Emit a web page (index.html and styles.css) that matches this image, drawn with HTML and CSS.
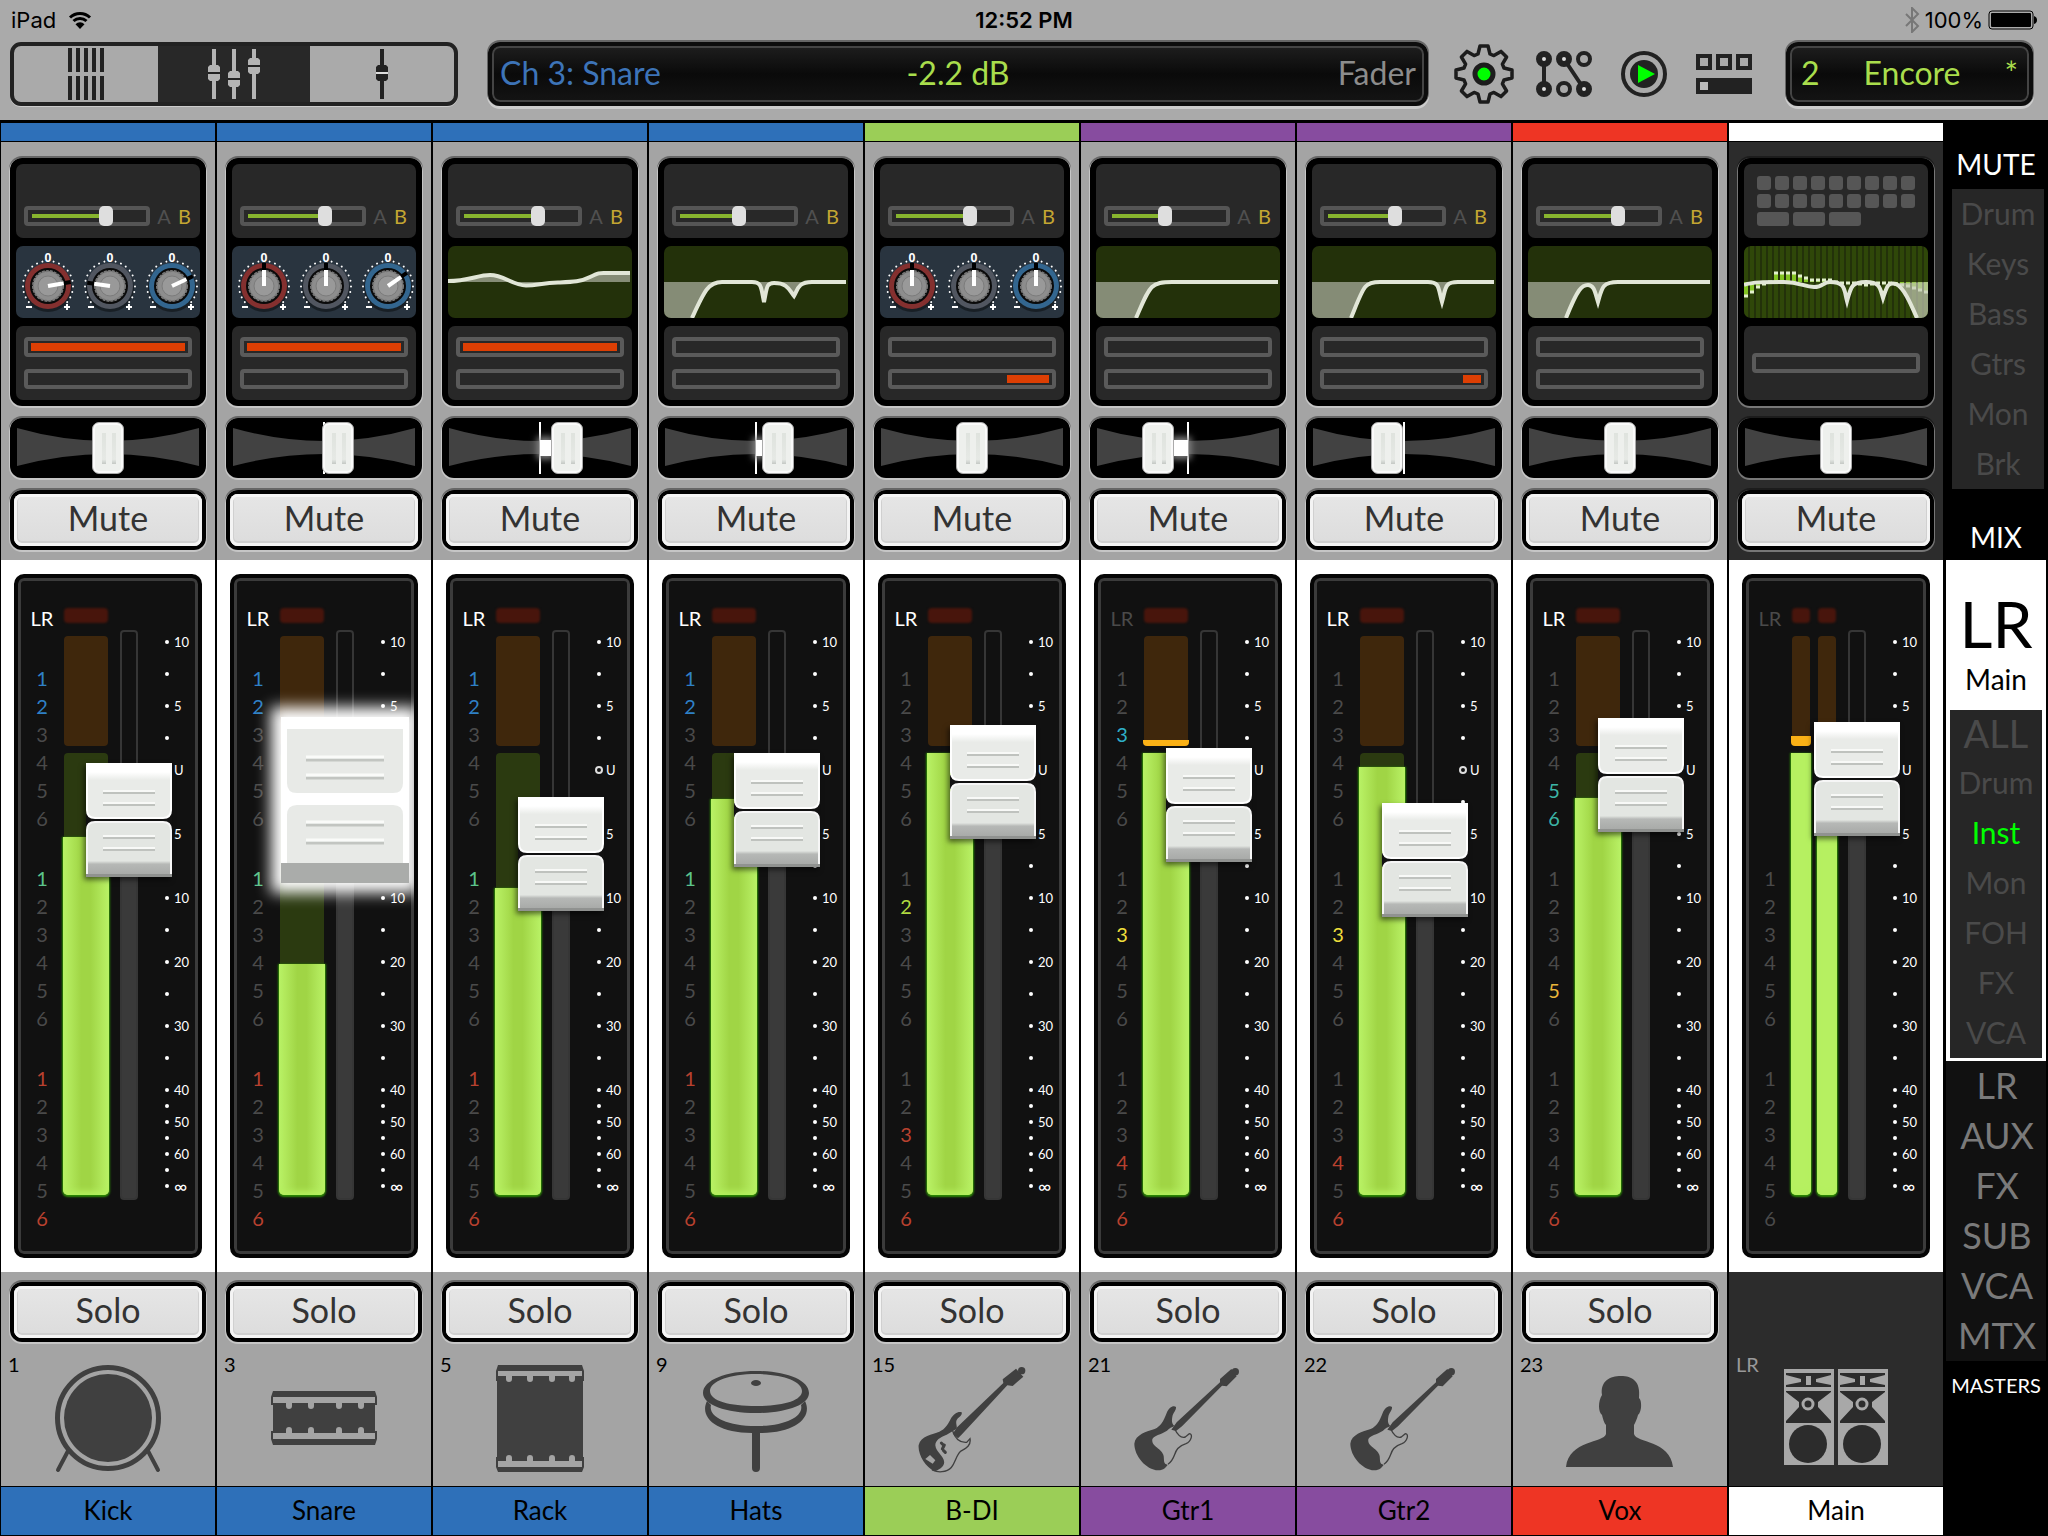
FILE: index.html
```html
<!DOCTYPE html>
<html lang="en">
<head>
    <meta charset="UTF-8">
    <meta name="viewport" content="width=device-width, initial-scale=1.0">
    <title>Mixer</title>
    <link rel="stylesheet" href="styles.css">
</head>
<body>

<svg class="symbols" aria-hidden="true">
    <symbol id="icon-kick" viewBox="0 0 108 108">
        <circle cx="54" cy="53" r="50.500" fill="none" stroke="currentColor" stroke-width="5"/>
        <circle cx="54" cy="53" r="44" fill="currentColor"/>
        <path d="M14 86L4 105M94 86l10 19" stroke="currentColor" stroke-width="4" stroke-linecap="round"/>
    </symbol>
    <symbol id="icon-snare" viewBox="0 0 108 108">
        <path fill="currentColor" d="M3 26h102l2 6H1zM1 32h2v8H1zM105 32h2v8h-2zM3 38h13v3a3 3 0 0 0 6 0v-3h16v3a3 3 0 0 0 6 0v-3h22v3a3 3 0 0 0 6 0v-3h16v3a3 3 0 0 0 6 0v-3h11v30H94v-3a3 3 0 0 0-6 0v3H72v-3a3 3 0 0 0-6 0v3H44v-3a3 3 0 0 0-6 0v3H22v-3a3 3 0 0 0-6 0v3H3zM1 66h2v8H1zM105 66h2v8h-2zM1 74h106l-2 6H3z"/>
    </symbol>
    <symbol id="icon-rack" viewBox="0 0 108 108">
        <path fill="currentColor" d="M12 0h84l2 6H10zM10 6h2v10h-2zM96 6h2v10h-2zM11 11h9v3a3 3 0 0 0 6 0v-3h15v3a3 3 0 0 0 6 0v-3h16v3a3 3 0 0 0 6 0v-3h14v3a3 3 0 0 0 6 0v-3h8v85h-8v-3a3 3 0 0 0-6 0v3H69v-3a3 3 0 0 0-6 0v3H47v-3a3 3 0 0 0-6 0v3H26v-3a3 3 0 0 0-6 0v3h-9zM10 92h2v10h-2zM96 92h2v10h-2zM10 102h88l-2 5H12z"/>
    </symbol>
    <symbol id="icon-hats" viewBox="0 0 108 108">
        <path fill="currentColor" fill-rule="evenodd" d="M54 6c30 0 53 9 53 22 0 12-23 20-53 20S1 40 1 28C1 15 24 6 54 6zm0 3C28 9 8 16 8 26s20 15 46 15 46-5 46-15S80 9 54 9z"/>
        <path fill="currentColor" d="M5 36c-8 16 9 32 45 32v35a4 4 0 0 0 8 0V68c36 0 53-16 45-32l-4 4c3 11-15 21-45 21S6 51 9 40z"/>
        <ellipse cx="54" cy="18" rx="5" ry="3" fill="currentColor"/>
    </symbol>
    <symbol id="icon-bass" viewBox="0 0 324 324">
        <path fill="currentColor" d="M131 142C122 138 108 144 98 162 88 180 82 192 64 200 44 208 8 212 2 240c-3 28 20 66 48 79 8-2 22-10 26-18 12-22-22-36-24-60 0-16 14-24 34-32l30-18c2-8-4-16 0-26 4-8 18-14 15-23z"/>
        <path fill="none" stroke="currentColor" stroke-width="4" d="M104 198c8 24 20 36 42 34l10-11c4 22-14 30-28 38-20 16-14 58-56 61-12 2-20-1-30-5"/>
        <path fill="currentColor" d="M104 206l14-20L256 54l-2-11 40-32 22 24-32 28-16-2L132 208l-12 12z"/>
        <circle cx="311" cy="17" r="11" fill="currentColor"/>
        <path stroke="currentColor" stroke-width="9" stroke-linecap="round" d="M70 234l6 6M76 256l6 6M79 240l-6 12"/>
        <path fill="#a4a4a4" d="M36 270l16 16-8 10-22-14z"/>
    </symbol>
    <symbol id="icon-guitar" viewBox="0 0 324 324">
        <path fill="currentColor" d="M126 126C118 120 104 128 98 144 88 170 80 184 62 192 38 200 4 208 1 236c0 36 34 78 72 80 16 0 24-10 28-17-14-2-10-12-12-26-4-22-38-28-34-50 4-12 26-14 44-26 8-8 14-10 22-14-8-8-8-16-6-28 2-12 12-18 11-29z"/>
        <path fill="none" stroke="currentColor" stroke-width="4" d="M122 192c8 16 20 28 32 24l12-10c12 0 6 24-10 30-44 14-24 40-54 62"/>
        <path fill="currentColor" d="M112 194l16-22L258 52l0-10 34-30 16 22-30 30-14-2L144 184l-18 14z"/>
        <circle cx="304" cy="20" r="11" fill="currentColor"/>
    </symbol>
    <symbol id="icon-vox" viewBox="0 0 108 108">
        <path fill="currentColor" d="M36 30C34 16 44 11 55 11s20 5 18 22c3 2 3 14-1 17-1 4-3 8-4 10v9c2 9 36 6 39 33H0c3-27 38-24 40-33v-9c-2-2-3-6-4-10-4-3-4-14 0-20z"/>
    </symbol>
    <symbol id="icon-speakers" viewBox="0 0 108 108">
        <g id="speaker">
            <path fill="#a8a8a8" d="M2 4h50v96H2z"/>
            <path fill="#2c2c2c" d="M4 8h45v14H4zM4 26h45v32H4z"/>
            <path fill="#a8a8a8" d="M4 10l15 4v3L4 20zM49 10l-15 4v3l15 3zM24 11h5v9h-5zM4 27l13 10v5L4 56zM49 27L36 37v5l13 14zM2 22h50v2H2z"/>
            <circle cx="26" cy="39" r="9" fill="#2c2c2c"/>
            <ellipse cx="26" cy="39" rx="5" ry="5" fill="none" stroke="#a8a8a8" stroke-width="3"/>
            <circle cx="26" cy="79" r="19" fill="#2c2c2c"/>
        </g>
        <use href="#speaker" x="54"/>
    </symbol>
</svg>

<header class="topbar">
    <div class="status">
        <span class="status-left">iPad
            <svg width="24" height="18" viewBox="0 0 24 18"><path d="M2 6.500a14.500 14.500 0 0 1 20 0M5.500 10a9.500 9.500 0 0 1 13 0" fill="none" stroke="#000" stroke-width="3"/><path d="M12 18l-4.500-4.800a6.400 6.400 0 0 1 9 0z"/></svg>
        </span>
        <time>12:52 PM</time>
        <span class="status-right">
            <svg width="16" height="26" viewBox="0 0 16 26"><path d="M2 7l12 12-6 6V1l6 6L2 19" fill="none" stroke="#777" stroke-width="2"/></svg>
            100%
            <svg width="49" height="20" viewBox="0 0 49 20"><rect x="1" y="1" width="44" height="18" rx="3" fill="none" stroke="#000"/><rect x="3" y="3" width="40" height="14" rx="1"/><path d="M46 6q3 1 3 4t-3 4z"/></svg>
        </span>
    </div>
    <div class="toolbar">
        <div class="segments">
            <button class="segment" aria-label="Overview">
                <svg width="36" height="52" viewBox="0 0 36 52"><path d="M2 0v24M10 0v24M18 0v24M26 0v24M34 0v24M2 28v24M10 28v24M18 28v24M26 28v24M34 28v24" stroke="#222" stroke-width="4"/></svg>
            </button>
            <button class="segment active" aria-label="Mixer">
                <svg width="54" height="50" viewBox="0 0 54 50"><path d="M7 0v50M27 0v50M47 0v50" stroke="#b4b4b4" stroke-width="4"/><path fill="#b4b4b4" d="M1 18l2-2h8l2 2v12l-2 2H3l-2-2zM21 24l2-2h8l2 2v12l-2 2h-8l-2-2zM41 11l2-2h8l2 2v12l-2 2h-8l-2-2z"/><path d="M1 24h12M21 30h12M41 17h12" stroke="#222" stroke-width="2"/></svg>
            </button>
            <button class="segment" aria-label="Channel">
                <svg width="12" height="50" viewBox="0 0 12 50"><path d="M6 0v50" stroke="#222" stroke-width="4"/><path fill="#222" d="M0 18l2-2h8l2 2v12l-2 2H2l-2-2z"/><path d="M0 24h12" stroke="#ddd" stroke-width="2"/></svg>
            </button>
        </div>
        <div class="display">
            <span class="display-channel">Ch 3: Snare</span>
            <output>-2.2 dB</output>
            <span class="display-mode">Fader</span>
        </div>
        <nav class="tools">
            <button aria-label="Settings">
                <svg width="60" height="60" viewBox="-30 -30 60 60"><path d="M-6-20L-4-28H4L6-20 9.900-18.400 17-22.600 22.600-17 18.400-9.900 20-6 28-4V4L20 6 18.400 9.900 22.600 17 17 22.600 9.900 18.400 6 20 4 28H-4L-6 20-9.900 18.400-17 22.600-22.600 17-18.400 9.900-20 6-28 4V-4L-20-6-18.400-9.900-22.600-17-17-22.600-9.900-18.400z" fill="none" stroke="#1c1c1c" stroke-width="3.500" stroke-linejoin="round"/><circle r="9" fill="#0f0" stroke="#1c1c1c" stroke-width="5"/></svg>
            </button>
            <button aria-label="Routing">
                <svg width="56" height="46" viewBox="0 0 56 46"><path d="M8 8v30M28 8l20 30" stroke="#222" stroke-width="4"/><g fill="#a9a9a9" stroke="#222" stroke-width="4"><circle cx="48" cy="8" r="6"/><circle cx="28" cy="38" r="6"/></g><g fill="#ddd" stroke="#222" stroke-width="6"><circle cx="8" cy="8" r="5"/><circle cx="28" cy="8" r="5"/><circle cx="8" cy="38" r="5"/><circle cx="48" cy="38" r="5"/></g></svg>
            </button>
            <button aria-label="Play">
                <svg width="46" height="46" viewBox="0 0 46 46"><circle cx="23" cy="23" r="21" fill="none" stroke="#222" stroke-width="4"/><circle cx="23" cy="23" r="14" fill="#222"/><path d="M17 14l17 9-17 9z" fill="#0f0"/></svg>
            </button>
            <button aria-label="Layout">
                <svg width="56" height="40" viewBox="0 0 56 40"><path d="M2 2h12v12H2zM22 2h12v12H22zM42 2h12v12H42z" fill="none" stroke="#222" stroke-width="4"/><path d="M0 24h56v16H0z" fill="#222"/><path d="M4 28h8v8H4z" fill="#bbb"/></svg>
            </button>
        </nav>
        <div class="display preset">
            <span>2</span>
            <span>Encore</span>
            <span>*</span>
        </div>
    </div>
</header>

<main class="console">
    <div class="strips" id="strips"></div>

    <aside class="sidebar">
        <h2>MUTE</h2>
        <div class="mute-groups">
            <button>Drum</button>
            <button>Keys</button>
            <button>Bass</button>
            <button>Gtrs</button>
            <button>Mon</button>
            <button>Brk</button>
        </div>
        <h2 class="mix-title">MIX</h2>
        <div class="mix">
            <div class="mix-name"><strong>LR</strong>Main</div>
            <div class="views">
                <button class="all">ALL</button>
                <button>Drum</button>
                <button class="on">Inst</button>
                <button>Mon</button>
                <button>FOH</button>
                <button>FX</button>
                <button>VCA</button>
            </div>
        </div>
        <div class="masters">
            <button>LR</button>
            <button>AUX</button>
            <button>FX</button>
            <button>SUB</button>
            <button>VCA</button>
            <button>MTX</button>
        </div>
        <h3>MASTERS</h3>
    </aside>
</main>

<script src="script.js"></script>
</body>
</html>
```

FILE: styles.css
```css
* {
    box-sizing: border-box;
}
body {
    margin: 0;
    background: #000;
    font-family: Lato, 'Liberation Sans', sans-serif;
    color: #000;
}
button {
    padding: 0;
    border: none;
    background: none;
    font: inherit;
    color: inherit;
    cursor: pointer;
}
svg {
    display: block;
}
h2, h3 {
    margin: 0;
    font-weight: 400;
}
.symbols {
    position: absolute;
    width: 0;
    height: 0;
}

/* top bar */
.topbar {
    height: 123px;
    background: #aaa;
    border-bottom: 3px solid #000;
}
.status {
    display: grid;
    grid-template-columns: 1fr auto 1fr;
    align-items: center;
    height: 40px;
    padding: 0 11px;
    font: 22px Inter, sans-serif;
}
.status time {
    font-weight: 600;
}
.status-left, .status-right {
    display: flex;
    align-items: center;
    gap: 12px;
}
.status-right {
    justify-content: flex-end;
    gap: 5px;
}
.toolbar {
    display: flex;
    align-items: center;
    height: 68px;
    padding: 0 15px 0 10px;
}
.segments {
    display: flex;
    width: 448px;
    height: 64px;
    border: 4px solid #222;
    border-radius: 11px;
    box-shadow: 0 1px 0 #ccc;
}
.segment {
    flex: 1;
    display: flex;
    align-items: center;
    justify-content: center;
}
.segment.active {
    flex: none;
    width: 152px;
    background: #282828;
}
.display {
    flex: 1;
    display: grid;
    grid-template-columns: 1fr auto 1fr;
    align-items: center;
    height: 64px;
    margin-left: 30px;
    padding: 0 8px 2px;
    background: linear-gradient(#1e1e1e, #0a0a0a 50%, #141414);
    border: 4px solid #0c0c0c;
    border-radius: 12px;
    box-shadow: inset 0 0 0 2px #444, 0 -1px 0 1px #666, 0 2px 0 1px #ccc;
    font-size: 32px;
    line-height: 36px;
    color: #a9dd4c;
}
.display-channel {
    color: #3d74b8;
}
.display-mode {
    text-align: right;
    color: #8c8c8c;
}
.tools {
    display: flex;
    align-items: center;
    margin: 0 4px 0 26px;
    gap: 22px;
}
.tools button:nth-child(3) {
    margin: 0 7px;
}
.preset {
    flex: none;
    grid-template-columns: auto 1fr auto;
    gap: 12px;
    width: 247px;
    padding: 0 11px 2px;
}
.preset span {
    text-align: center;
}

/* channel strips */
.console {
    display: flex;
}
.strips {
    flex: 1;
    display: grid;
    grid-template-columns: repeat(9, 1fr);
    gap: 2px;
    padding: 0 1px;
}
.strip {
    --tint: #2e70b9;
    --panel: #a4a4a4;
    --lo: #c6c6c6;
    --hi: #666;
    display: flex;
    flex-direction: column;
    min-width: 0;
    padding-bottom: 1px;
}
.strip.lime { --tint: #9bce57; }
.strip.purple { --tint: #874c9f; }
.strip.red { --tint: #ee3524; }
.strip.main {
    --tint: #fff;
    --panel: #2c2c2c;
    --lo: #777;
    --hi: #1c1c1c;
}
.tab {
    height: 18px;
    margin-bottom: 1px;
    background: var(--tint);
}
.head {
    display: flex;
    flex-direction: column;
    gap: 12px;
    padding: 16px 9px 10px;
    background: var(--panel);
}
.fx, .pan, .push {
    border-radius: 12px;
    background: #000;
    box-shadow: 0 1px 0 1px var(--lo), 0 -1px 0 1px var(--hi);
}
.fx {
    display: grid;
    grid-template-rows: 74px 72px 74px;
    gap: 8px;
    padding: 6px;
}
.cell {
    min-width: 0;
    overflow: hidden;
    border-radius: 7px;
    background: #282828;
}
.cell svg {
    width: 100%;
    height: 100%;
}
.sends {
    display: flex;
    align-items: flex-end;
    justify-content: space-between;
    padding: 0 9px 12px 8px;
    font-size: 20px;
    line-height: 20px;
    color: #505050;
}
.sends b {
    font-weight: 400;
    color: #c3a632;
}
.gain {
    appearance: none;
    width: 126px;
    height: 20px;
    margin: 0;
    border-radius: 4px;
    background: linear-gradient(#87b42e, #87b42e) 8px 50% / calc(var(--v) * 1px) 4px no-repeat;
    box-shadow: inset 0 0 0 4px #555;
}
.gain::-webkit-slider-thumb {
    appearance: none;
    width: 14px;
    height: 20px;
    border-radius: 5px;
    background: #dedede;
}
.geq {
    display: grid;
    grid-template-columns: repeat(9, 1fr);
    grid-auto-rows: 14px;
    align-content: start;
    gap: 4px;
    padding: 12px 13px;
}
.geq i {
    border-radius: 3px;
    background: #565656;
}
.geq .wide {
    grid-column: span 2;
}
.knobs {
    background: #29343f;
}
.knobs text {
    font: 700 12px 'Noto Sans', sans-serif;
    fill: #fff;
    text-anchor: middle;
}
.eq {
    background: #23310a;
}
.dynamics {
    display: flex;
    flex-direction: column;
    justify-content: center;
    gap: 12px;
    padding: 0 8px;
}
.reduction {
    display: flex;
    justify-content: flex-end;
    height: 20px;
    padding: 2px 3px;
    border: 4px solid #5a5a5a;
    border-radius: 4px;
}
.reduction i {
    background: #dd3f04;
}
.pan {
    position: relative;
    height: 60px;
}
.pan svg {
    width: 100%;
    height: 60px;
}
.pan input {
    position: absolute;
    inset: 4px 0;
    appearance: none;
    width: 100%;
    height: 52px;
    margin: 0;
    background: none;
}
.pan input::-webkit-slider-thumb {
    appearance: none;
    width: 32px;
    height: 52px;
    border: 1px solid #aaa;
    border-radius: 7px;
    background:
        linear-gradient(#dfe3de, #e6e9e5 85%, #c4c8c4) 9px 10px / 4px 31px no-repeat,
        linear-gradient(#dfe3de, #e6e9e5 85%, #c4c8c4) 19px 10px / 4px 31px no-repeat,
        #eef0ed;
    box-shadow: inset 0 0 0 2px #fafafa;
}
.pan-mark {
    position: absolute;
    top: 4px;
    left: 50%;
    width: 2px;
    height: 52px;
    margin-left: -1px;
    background: #fff;
}
.pan-glow {
    position: absolute;
    top: 22px;
    height: 16px;
    background: #fff;
    box-shadow: 0 0 7px 3px #888;
}
.pan-glow.right { left: 50%; }
.pan-glow.left { right: 50%; }
.push {
    display: block;
    width: 100%;
    height: 60px;
    padding: 4px;
    font-size: 34px;
    color: #333;
}
.push span {
    display: block;
    height: 52px;
    border-radius: 8px;
    background: linear-gradient(#e6e6e6, #dcdcdc);
    box-shadow: inset 0 0 0 3px #f4f4f4, inset 0 -1px 0 4px #d0d0d0;
    line-height: 48px;
}

/* fader section */
.fader-zone {
    padding: 14px 13px;
    background: #fff;
}
.fader-box {
    position: relative;
    display: flex;
    height: 684px;
    overflow: hidden;
    border: 4px solid #050505;
    border-radius: 10px;
    background: #111;
    box-shadow: inset 0 0 0 3px #3b3b3b;
    padding: 0 3px;
}
.assign {
    flex: 1;
    padding: 26px 0 0;
    font-size: 20px;
    line-height: 28px;
    text-align: center;
    color: #4a4a4a;
}
.assign ol {
    margin: 0;
    padding: 32px 0 0;
    list-style: none;
}
.assign .blank {
    visibility: hidden;
}
.assign .white { color: #fff; }
.blue { color: #2f80c6; }
.cyan { color: #2fb0c8; }
.teal { color: #3cb5a6; }
.green { color: #5cc48b; }
.olive { color: #b0d940; }
.yellow { color: #efdf3c; }
.amber { color: #e9b53a; }
.rust { color: #b8412f; }
.meters {
    display: flex;
    justify-content: space-between;
    width: 46px;
}
.meter {
    display: grid;
    grid-template-rows: 15px 110px 442px;
    align-content: start;
    width: 46px;
    padding-top: 30px;
}
.stereo .meter {
    width: 20px;
}
.clip, .hot, .level {
    display: flex;
    align-items: flex-end;
    margin: 0 1px;
    border-radius: 4px;
}
.clip {
    background: #48150c;
    filter: blur(1px);
}
.hot {
    margin-top: 13px;
    margin-bottom: -13px;
    background: #3f270c;
}
.level {
    margin-top: 20px;
    margin-bottom: -20px;
    background: #2b3a10;
}
.hot i {
    flex: 1;
    height: calc(var(--h) * 1px);
    margin: 0 -1px;
    border-radius: 0 0 4px 4px;
    background: #fbb116;
}
.level i {
    flex: 1;
    height: calc(var(--h) * 1px);
    margin: 0 -1px;
    border-radius: 0 0 5px 5px;
    background: linear-gradient(90deg, #baf267, #a0d545 40%, #a0d545 60%, #baf267);
    box-shadow: inset 0 -6px 6px -2px #b4f05e, 0 1px 2px 1px #2d8c05;
}
.stereo .level i {
    background: #b6f061;
}
.track {
    width: 18px;
    height: 570px;
    margin: 52px 27px 0 11px;
    border: 2px solid #363636;
    border-radius: 4px;
    background: linear-gradient(#111, #111) 0 0 / 100% calc(var(--t) * 1px) no-repeat, #3a3a3a;
}
.scale {
    width: 30px;
    margin: 0;
    padding: 48px 0 0;
    list-style: none;
    font-size: 13px;
    line-height: 32px;
    color: #fff;
}
.scale li {
    display: flex;
    align-items: center;
    gap: 5px;
    height: 32px;
}
.scale li::before {
    content: "";
    width: 4px;
    height: 4px;
    border-radius: 50%;
    background: #fff;
}
.scale .unity {
    gap: 3px;
}
.scale .unity::before {
    box-sizing: border-box;
    width: 8px;
    height: 8px;
    margin-left: -2px;
    border: 2px solid #ddd;
    background: none;
}
.scale .tight {
    height: 16px;
}
.scale .first {
    margin-top: 8px;
}
.scale li:last-child {
    font-size: 18px;
}
.fader {
    position: absolute;
    top: 7px;
    right: 26px;
    writing-mode: vertical-lr;
    direction: rtl;
    appearance: none;
    width: 86px;
    height: 658px;
    margin: 0;
    background: none;
}
.fader::-webkit-slider-thumb {
    appearance: none;
    width: 86px;
    height: 114px;
    background: url("data:image/svg+xml,%3Csvg xmlns='http://www.w3.org/2000/svg' viewBox='0 0 86 114' preserveAspectRatio='none'%3E%3ClinearGradient id='a' x2='0' y2='1'%3E%3Cstop stop-color='%23fff'/%3E%3Cstop offset='.15' stop-color='%23fff'/%3E%3Cstop offset='.3' stop-color='%23e9ebe8'/%3E%3Cstop offset='1' stop-color='%23e9ebe8'/%3E%3C/linearGradient%3E%3ClinearGradient id='b' x2='0' y2='1'%3E%3Cstop offset='.72' stop-color='%23e3e6e2'/%3E%3Cstop offset='.78' stop-color='%23b6b8b6'/%3E%3Cstop offset='1' stop-color='%23a6a8a6'/%3E%3C/linearGradient%3E%3Cpath d='M0 50h86v14H0z' fill='%23111'/%3E%3Cpath d='M1 1h84v46q0 8-8 8H9q-8 0-8-8z' fill='url(%23a)' stroke='%23fff' stroke-width='2'/%3E%3Cpath d='M1 113V67q0-8 8-8h68q8 0 8 8v46z' fill='url(%23b)' stroke='%23f6f6f6' stroke-width='2'/%3E%3Cpath d='M0 111h86v3H0z' fill='%23909290'/%3E%3Cpath d='M17 30h52M17 42h52M17 75h52M17 87h52' stroke='%23bfc2be' stroke-width='2'/%3E%3Cpath d='M17 28h52M17 40h52M17 73h52M17 85h52' stroke='%23f8f9f7' stroke-width='2'/%3E%3C/svg%3E") 0 0 / 100% 100%;
    box-shadow: -2px 3px 5px #0008;
}
.fader.touched {
    top: -19px;
    right: 5px;
    width: 128px;
    height: 710px;
}
.fader.touched::-webkit-slider-thumb {
    width: 128px;
    height: 166px;
    background: url("data:image/svg+xml,%3Csvg xmlns='http://www.w3.org/2000/svg' viewBox='0 0 128 166' preserveAspectRatio='none'%3E%3Cpath d='M0 0h128v166H0z' fill='%23fff'/%3E%3Cpath d='M6 12h116v54q0 10-10 10H16q-10 0-10-10zM6 154V98q0-10 10-10h96q10 0 10 10v56z' fill='%23e8eae7'/%3E%3Cpath d='M0 146h128v20H0z' fill='%23aaacaa'/%3E%3Cpath d='M25 43h78M25 61h78M25 108h78M25 126h78' stroke='%23c2c5c1' stroke-width='3'/%3E%3Cpath d='M25 40h78M25 58h78M25 105h78M25 123h78' stroke='%23fafbf9' stroke-width='3'/%3E%3C/svg%3E") 0 0 / 100% 100%;
    box-shadow: 0 0 14px 10px #fff;
}

/* strip footer */
.foot {
    flex: 1;
    display: flex;
    flex-direction: column;
    justify-content: flex-end;
    padding: 10px 9px 0;
    background: var(--panel);
}
.badge {
    display: grid;
    height: 144px;
    margin: 0 -2px;
    padding-top: 10px;
    font-size: 20px;
    line-height: 24px;
}
.badge span, .badge svg {
    grid-area: 1 / 1;
}
.badge svg {
    width: 108px;
    height: 108px;
    place-self: center;
    color: #404040;
}
.main .badge {
    color: #999;
}
.name {
    margin-top: 1px;
    padding-bottom: 2px;
    background: var(--tint);
    font-size: 26px;
    line-height: 46px;
    text-align: center;
}

/* right column */
.sidebar {
    width: 104px;
    padding: 0 2px;
    text-align: center;
    color: #fff;
}
.sidebar h2 {
    padding: 24px 0 8px;
    font-size: 28px;
    line-height: 34px;
}
.sidebar .mix-title {
    padding: 31px 0 6px;
}
.sidebar h3 {
    font-size: 20px;
    line-height: 48px;
}
.sidebar button {
    display: block;
    width: 100%;
    height: 50px;
    padding-bottom: 3px;
    font-size: 30px;
    line-height: 36px;
}
.mute-groups, .views {
    background: #262626;
    color: #4a4a4a;
}
.mute-groups {
    margin: 0 2px 0 6px;
}
.mix {
    padding: 0 4px 3px;
    background: #fff;
    color: #000;
}
.mix-name {
    height: 150px;
    padding-top: 28px;
    font-size: 28px;
    line-height: 38px;
}
.mix-name strong {
    display: block;
    font-size: 64px;
    font-weight: 400;
    line-height: 72px;
}
.views {
    padding-top: 1px;
}
.sidebar .views .all {
    height: 47px;
    font-size: 38px;
}
.views .on {
    color: #0f0;
}
.masters {
    padding-left: 2px;
    background: #111;
    color: #7a7a7a;
}
.sidebar .masters button {
    font-size: 36px;
}
```

FILE: script.js
```js
const channels = [
    { name: 'Kick', number: '1', icon: 'kick', gain: 75, knobs: [80, -82, 65], reduction: [100, 0], pan: 0, level: 358, fader: 366, sends: { 1: 'blue', 2: 'blue', 7: 'green', 13: 'rust', 18: 'rust' } },
    { name: 'Snare', number: '3', icon: 'snare', gain: 78, knobs: [0, 0, 55], reduction: [100, 0], pan: 14, level: 231, fader: 386, touched: true, sends: { 1: 'blue', 2: 'blue', 7: 'green', 13: 'rust', 18: 'rust' } },
    { name: 'Rack', number: '5', icon: 'rack', gain: 75, eq: 'M0 35C20 35 30 29 42 29 56 29 64 39 78 39.500 90 39 95 37 110 36.500S132 36 142 31 152 27 160 27H182', shade: 'V36H0z', reduction: [100, 0], pan: 27, level: 307, fader: 332, sends: { 1: 'blue', 2: 'blue', 7: 'green', 13: 'rust', 18: 'rust' } },
    { name: 'Hats', number: '9', icon: 'hats', gain: 60, eq: 'M28 72C40 46 44 36 58 36H88C98 36 97 42 100 56 103 42 102 37 110 37 124 37 125 44 130 50 134 43 134 36 148 36H182', shade: 'H0V72z', reduction: [0, 0], pan: 22, level: 396, fader: 376, sends: { 1: 'blue', 2: 'blue', 7: 'green', 13: 'rust', 18: 'rust' } },
    { name: 'B-DI', number: '15', icon: 'bass', color: 'lime', gain: 75, knobs: [0, 0, 0], reduction: [0, 27], pan: 0, level: 442, fader: 404, sends: { 8: 'olive', 15: 'rust', 18: 'rust' } },
    { name: 'Gtr1', number: '21', icon: 'guitar', color: 'purple', gain: 54, eq: 'M40 72C54 40 54 36 76 36H182', shade: 'H0V72z', reduction: [0, 0], pan: -30, level: 442, hot: 6, fader: 381, lrOff: true, sends: { 3: 'cyan', 9: 'yellow', 16: 'rust', 18: 'rust' } },
    { name: 'Gtr2', number: '22', icon: 'guitar', color: 'purple', gain: 68, eq: 'M39 72C52 40 52 36 68 36H116C128 36 126 42 130 56 134 42 132 36 146 36H182', shade: 'H0V72z', reduction: [0, 12], pan: -17, level: 428, fader: 326, sends: { 9: 'yellow', 16: 'rust', 18: 'rust' } },
    { name: 'Vox', number: '23', icon: 'vox', color: 'red', gain: 75, eq: 'M38 72C50 42 54 39 60 39S67 46 70 56C74 42 74 36 90 36H182', shade: 'H0V72z', reduction: [0, 0], pan: 0, level: 397, fader: 411, sends: { 5: 'teal', 6: 'teal', 11: 'amber', 18: 'rust' } },
    { name: 'Main', number: 'LR', icon: 'speakers', color: 'main', main: true, eq: 'M0 39C8 36 20 36 40 36 56 36 60 41 70 41S78 36 86 36C102 36 100 44 103 55 107 40 108 36 122 36 136 36 136 42 139 52 143 40 144 36 152 38 160 42 166 56 173 72', shade: 'H184V36H0z', reduction: [0], pan: 0, level: 442, hot: 10, fader: 407, lrOff: true, sends: {} }
];

const scale = ['10', '', '5', '', 'U', '', '5', '', '10', '', '20', '', '30', '', '40', '', '50', '', '60', '', '∞'];
const geqTips = [50, 46, 41, 38, 36, 27, 27, 27, 27, 30, 32, 34, 34, 34, 34, 36, 37, 37, 37, 38, 39, 38, 37, 37, 37, 38, 39, 40, 42, 44, 46];

function knob(x, angle, color) {
    let dots = '';
    for (let a = -130; a <= 130; a += 13) {
        if (a > -12 && a < 12) continue;
        dots += `<circle cx="0" cy="-25" r="1" transform="rotate(${a})"/>`;
    }
    return `<g transform="translate(${x} 40)">
        <circle cy="2" r="24" fill="#0006"/>
        <circle r="23" fill="${color}"/>
        <circle r="18" fill="#0a0a0a"/>
        <circle r="15" fill="#8d8d8d" stroke="#777" stroke-width="2" stroke-dasharray="3 1"/>
        <circle r="10" fill="#999" stroke="#7c7c7c"/>
        <g fill="#fff">${dots}</g>
        <g transform="rotate(${angle})"><path d="M0-14V-23" stroke="#000" stroke-width="4"/><path d="M0 0V-16" stroke="#fff" stroke-width="4"/></g>
        <path d="M-22 21h6M16 21h6M19 18v6" stroke="#fff" stroke-width="2"/>
        <text y="-24">0</text>
    </g>`;
}

function eqCell(ch) {
    if (ch.knobs) {
        const colors = ['#84302f', '#515660', '#33668f'];
        const knobs = ch.knobs.map((angle, i) => knob(32 + i * 62, angle, colors[i])).join('');
        return `<div class="cell knobs"><svg viewBox="0 0 184 72">${knobs}</svg></div>`;
    }
    let bars = '';
    if (ch.main) {
        geqTips.forEach((y, i) => {
            const x = i * 6;
            bars += `<path d="M${x + 2} 0V72" stroke="#2f4709" stroke-width="4"/>`;
            bars += `<path d="M${x + 2} 36V${y}" stroke="#82c322" stroke-width="4"/>`;
            bars += `<path d="M${x} ${y}h4" stroke="#e2f0cc" stroke-width="3"/>`;
        });
    }
    return `<div class="cell eq"><svg viewBox="0 0 184 72" preserveAspectRatio="none">${bars}
        <path d="${ch.eq}${ch.main ? '' : ch.shade}" fill="${ch.main ? 'none' : '#858c76'}"/>
        ${ch.main ? '<path d="M152 37C160 42 166 56 173 72H184V36z" fill="#c4cbb5" opacity=".7"/>' : ''}
        <path d="${ch.eq}" fill="none" stroke="#e1e6d7" stroke-width="4"/></svg></div>`;
}

function sendsCell(ch) {
    if (ch.main) {
        return `<div class="cell geq">${'<i></i>'.repeat(18)}${'<i class="wide"></i>'.repeat(3)}</div>`;
    }
    return `<div class="cell sends">
        <input class="gain" type="range" min="0" max="112" value="${ch.gain}" style="--v: ${ch.gain}" aria-label="${ch.name} gain">
        <span>A</span><b>B</b>
    </div>`;
}

function panCell(ch) {
    let mark = '';
    if (ch.pan) {
        const size = Math.max(0, Math.abs(ch.pan) - 16);
        mark = `<div class="pan-mark"></div>`;
        if (size > 2) mark += `<div class="pan-glow ${ch.pan > 0 ? 'right' : 'left'}" style="width: ${size}px"></div>`;
    }
    return `<div class="pan">
        <svg viewBox="0 0 196 60" preserveAspectRatio="none"><path d="M7 10Q98 36 189 10V48Q98 24 7 48z" fill="#424242"/></svg>
        ${mark}
        <input type="range" min="-82" max="82" value="${ch.pan}" aria-label="${ch.name} pan">
    </div>`;
}

function assignList(ch) {
    let html = `<div class="${ch.lrOff ? '' : 'white'}">LR</div>`;
    for (let group = 0; group < 3; group++) {
        html += `<ol class="${ch.main && group === 0 ? 'blank' : ''}">`;
        for (let n = 1; n <= 6; n++) {
            html += `<li class="${ch.sends[group * 6 + n] || ''}">${n}</li>`;
        }
        html += '</ol>';
    }
    return html;
}

function meter(level, hot) {
    return `<div class="meter">
        <div class="clip"></div>
        <div class="hot">${hot ? `<i style="--h: ${hot}"></i>` : ''}</div>
        <div class="level"><i style="--h: ${level}"></i></div>
    </div>`;
}

function scaleList() {
    return scale.map((label, i) => {
        let cls = i >= 14 ? 'tight' : '';
        if (i === 14) cls += ' first';
        if (label === 'U') cls = 'unity';
        return `<li class="${cls}">${label}</li>`;
    }).join('');
}

document.getElementById('strips').innerHTML = channels.map(ch => `
    <section class="strip ${ch.color || ''}">
        <div class="tab"></div>
        <div class="head">
            <div class="fx">
                ${sendsCell(ch)}
                ${eqCell(ch)}
                <div class="cell dynamics">
                    ${ch.reduction.map(r => `<div class="reduction"><i style="width: ${r}%"></i></div>`).join('')}
                </div>
            </div>
            ${panCell(ch)}
            <button class="push"><span>Mute</span></button>
        </div>
        <div class="fader-zone">
            <div class="fader-box">
                <div class="assign">${assignList(ch)}</div>
                <div class="meters ${ch.main ? 'stereo' : ''}">
                    ${meter(ch.level, ch.hot)}
                    ${ch.main ? meter(ch.level, 0) : ''}
                </div>
                <div class="track" style="--t: ${556 - ch.fader}"></div>
                <ul class="scale">${scaleList()}</ul>
                <input class="fader ${ch.touched ? 'touched' : ''}" type="range" min="0" max="544" value="${ch.fader}" aria-label="${ch.name} level">
            </div>
        </div>
        <div class="foot">
            ${ch.main ? '' : '<button class="push"><span>Solo</span></button>'}
            <div class="badge">
                <span>${ch.number}</span>
                <svg><use href="#icon-${ch.icon}"/></svg>
            </div>
        </div>
        <div class="name">${ch.name}</div>
    </section>
`).join('');
```
